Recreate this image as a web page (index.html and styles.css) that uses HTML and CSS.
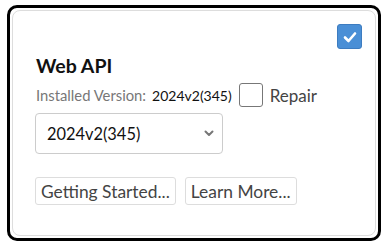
FILE: index.html
```html
<!DOCTYPE html>
<html>
<head>
<meta charset="utf-8">
<link rel="stylesheet" href="styles.css">
</head>
<body>
<div class="frame">
  <div class="card">
    <div class="top-row">
      <span class="check checked">
        <svg width="14" height="12" viewBox="0 0 14 12"><path d="M2 6.5 L5.5 10 L12 2.5" fill="none" stroke="#fff" stroke-width="2.6" stroke-linecap="round" stroke-linejoin="round"/></svg>
      </span>
    </div>
    <div class="title">Web API</div>
    <div class="installed">
      <span class="label">Installed Version:</span>
      <span class="value">2024v2(345)</span>
      <span class="check empty"></span>
      <span class="repair">Repair</span>
    </div>
    <div class="select">
      <span class="select-text">2024v2(345)</span>
      <svg class="chev" width="10" height="7" viewBox="0 0 10 7"><path d="M1.5 1.5 L5 5 L8.5 1.5" fill="none" stroke="#777" stroke-width="2" stroke-linecap="round" stroke-linejoin="round"/></svg>
    </div>
    <div class="buttons">
      <span class="btn">Getting Started...</span>
      <span class="btn">Learn More...</span>
    </div>
  </div>
</div>
</body>
</html>
```

FILE: styles.css
```css
html, body { margin: 0; padding: 0; background: #fff; }
body { font-family: Lato, "Noto Sans", sans-serif; width: 387px; height: 248px; }
.frame {
  box-sizing: border-box;
  margin: 5px 0 0 7px;
  width: 374px;
  height: 236px;
  border: 3px solid #000;
  border-radius: 10px;
  padding: 2px;
}
.card {
  box-sizing: border-box;
  height: 100%;
  border: 1px solid #ddd;
  border-radius: 8px;
  padding: 13px 13px 0 23px;
}
.top-row { display: flex; justify-content: flex-end; height: 25px; }
.check {
  box-sizing: border-box;
  width: 25px; height: 25px;
  border-radius: 3px;
  display: inline-flex; align-items: center; justify-content: center;
}
.check.checked { background: #4a8fd6; border: 1px solid #3d7cc0; }
.check.empty { border: 1px solid #777; background: #fff; width: 24px; height: 24px; }
.title { font-weight: 700; font-size: 19.5px; color: #111; margin-top: 6px; line-height: 22px; }
.installed { display: flex; align-items: center; margin-top: 5px; height: 26px; }
.label { color: #777; font-size: 14.8px; }
.value { color: #111; font-size: 14px; margin-left: 6px; }
.installed .check.empty { margin-left: 7px; }
.repair { color: #444; font-size: 17px; margin-left: 7px; }
.select {
  box-sizing: border-box;
  display: flex; align-items: center; justify-content: space-between;
  width: 188px; height: 41px;
  border: 1px solid #ccc; border-radius: 4px;
  padding: 0 8px 0 11px;
  margin-top: 5px;
  margin-left: -1px;
}
.select-text { font-size: 16.4px; color: #111; }
.buttons { display: flex; gap: 9px; margin-top: 23px; margin-left: -1px; }
.btn {
  box-sizing: border-box;
  height: 28px;
  border: 1px solid #ddd; border-radius: 3px;
  padding: 0 5px;
  font-size: 17.4px; color: #444;
  display: inline-flex; align-items: center;
}
```
